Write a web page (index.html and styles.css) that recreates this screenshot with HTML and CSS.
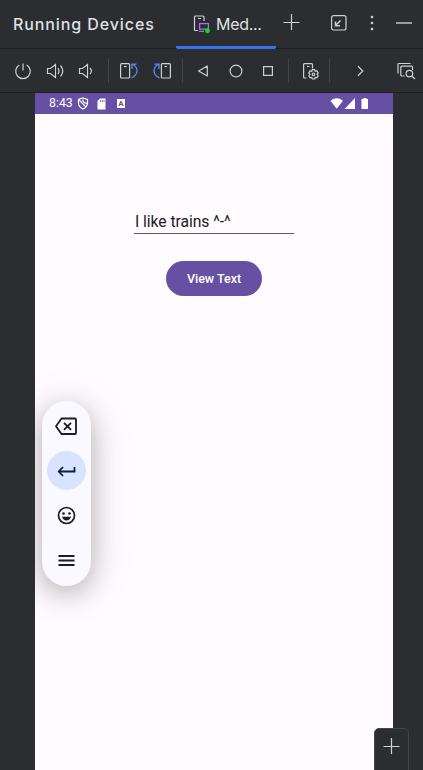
FILE: index.html
```html
<!DOCTYPE html>
<html lang="en">
<head>
<meta charset="utf-8">
<title>Running Devices</title>
<link rel="stylesheet" href="styles.css">
</head>
<body>
<div class="window">
  <header class="header">
    <h1 class="title">Running Devices</h1>
    <div class="tab">
      <svg class="tab-icon" width="18" height="20" viewBox="0 0 18 20" fill="none">
        <path d="M5 16.500H2.500Q1.500 16.500 1.500 15.500V3Q1.500 2 2.500 2H10Q11 2 11 3V7M5 4.500H8" stroke="#ced0d6" stroke-width="1.200"/>
        <path d="M6.600 9.600H15.400V15.200H6.600ZM6 17.400H11" stroke="#a571e6" stroke-width="1.300"/>
        <circle cx="14.500" cy="16.800" r="2.400" fill="#00f000"/>
      </svg>
      <span>Med...</span>
    </div>
    <svg class="add" width="18" height="18" viewBox="0 0 18 18"><path d="M9.500 1V17M1.500 9.500H17.500" stroke="#ced0d6" stroke-width="1.200"/></svg>
    <svg class="dock" width="18" height="18" viewBox="0 0 18 18" fill="none" stroke="#ced0d6" stroke-width="1.200"><rect x="1.600" y="1.600" width="14.400" height="14.400" rx="2"/><path d="M10.500 6.500L5.500 11.500M5.500 7.500V11.700H10" stroke-width="1.500"/></svg>
    <svg class="more" width="4" height="18" viewBox="0 0 4 18" fill="#ced0d6"><circle cx="2" cy="3" r="1.300"/><circle cx="2" cy="9" r="1.300"/><circle cx="2" cy="15" r="1.300"/></svg>
    <span class="minimize"></span>
  </header>

  <nav class="toolbar">
    <svg class="icon first" viewBox="0 0 20 20"><path d="M6.300 4A7.300 7.300 0 1 0 13.700 4M10 2.500V9.500"/></svg>
    <svg class="icon g12" viewBox="0 0 20 20"><path d="M2.500 7.500H5.500L10.500 3.500V16.500L5.500 12.500H2.500ZM13 7Q15 10 13 13M15.500 4.500Q20 10 15.500 15.500"/></svg>
    <svg class="icon g12" viewBox="0 0 20 20"><path d="M2.500 7.500H5.500L10.500 3.500V16.500L5.500 12.500H2.500ZM13 7Q15.800 10 13 13"/></svg>
    <i class="sep g11"></i>
    <svg class="icon g10" viewBox="0 0 20 20"><rect x="1.600" y="2.600" width="9" height="14.400" rx="1"/><path d="M5 5.500H7.500"/><path class="blue" d="M12.500 17C19.800 13.500 19.600 6.500 13.500 3.200M13 8V3.200H17.500"/></svg>
    <svg class="icon g13" viewBox="0 0 20 20"><rect x="9.400" y="2.600" width="9" height="14.400" rx="1"/><path d="M12.500 5.500H15"/><path class="blue" d="M7.500 17C.2 13.500 .4 6.500 6.500 3.200M7 8V3.200H2.500"/></svg>
    <i class="sep g10"></i>
    <svg class="icon g10" viewBox="0 0 20 20"><path d="M14.300 5V15L5.600 10Z" stroke-linejoin="round"/></svg>
    <svg class="icon g13" viewBox="0 0 20 20"><circle cx="10" cy="10" r="5.900"/></svg>
    <svg class="icon g12" viewBox="0 0 20 20"><rect x="5.600" y="5.600" width="8.800" height="8.800"/></svg>
    <i class="sep g10"></i>
    <svg class="icon gear" viewBox="0 0 20 20"><path d="M6.500 17H4.500Q3.600 17 3.600 16V3.500Q3.600 2.600 4.500 2.600H11.500Q12.500 2.600 12.500 3.600V7.500M7 5.500H9.500"/><path d="M12.300 8.700H14.700L15.200 10.200L17 9.900L18.200 12L17.100 13.300L18.200 14.700L17 16.700L15.200 16.400L14.700 18H12.300L11.800 16.400L10 16.700L8.800 14.700L9.900 13.300L8.800 12L10 9.900L11.800 10.200Z"/><circle cx="13.500" cy="13.300" r="1.300"/></svg>
    <i class="sep g9"></i>
    <svg class="icon g20" viewBox="0 0 20 20"><path d="M8 5.300L12.800 10L8 14.700"/></svg>
    <svg class="icon g26" viewBox="0 0 20 20"><path d="M2 12.500V3.500Q2 2.500 3 2.500H14.500M8.500 15H5.800Q4.800 15 4.800 14V6.200Q4.800 5.200 5.800 5.200H15.500Q16.500 5.200 16.500 6.200V9"/><circle cx="13.400" cy="12.600" r="3.300"/><path d="M15.800 15L19 18"/></svg>
  </nav>

  <main class="device">
    <div class="status">
      <span class="time">8:43</span>
      <svg class="shield" width="12" height="13" viewBox="0 0 12 13" fill="none" stroke="#fff" stroke-width="1.200"><path d="M6 1L10.500 2.500V6Q10.500 10 6 12Q1.500 10 1.500 6V2.500ZM2 2.800L9 10M6 2.500V4.500Q7.500 6.500 10 6"/></svg>
      <svg class="sd" width="9" height="12" viewBox="0 0 9 12"><path d="M3 .5H8.500V11.500H.5V3Z" fill="#fff"/><path d="M3.500 2V4M5.200 2V4M7 2V4" stroke="#6750a4" stroke-width=".8"/></svg>
      <span class="lang">A</span>
      <svg class="signals" width="40" height="13" viewBox="0 0 40 13" fill="#fff"><path d="M.5 3.700Q6.700-1.200 13 3.700L6.700 11.700Z"/><path d="M25 1V12H14.500Z"/><path d="M33.500 1H36.500V2H38V12H31.500V2H33.500Z"/></svg>
    </div>
    <div class="field">I like trains ^-^</div>
    <button class="view">View Text</button>
    <aside class="keys">
      <svg width="24" height="24" viewBox="0 0 24 24" fill="none" stroke="#1b1b21" stroke-width="1.800"><path d="M7.500 4.500H21Q22 4.500 22 5.500V19Q22 20 21 20H7.500L2 12.300Z" stroke-linejoin="round"/><path d="M10 8.800L17 15.800M17 8.800L10 15.800"/></svg>
      <span class="enter"><svg width="24" height="24" viewBox="0 0 24 24" fill="none" stroke="#0c1e42" stroke-width="1.800"><path d="M19.500 8V12.500H4.500M8 8L3.800 12.500L8 17"/></svg></span>
      <svg width="24" height="24" viewBox="0 0 24 24"><g transform="translate(.5 .5)"><circle cx="12" cy="12" r="8" fill="none" stroke="#1b1b21" stroke-width="1.700"/><circle cx="9" cy="10" r="1.300" fill="#1b1b21"/><circle cx="15" cy="10" r="1.300" fill="#1b1b21"/><path d="M7.500 13.300H16.500Q15.500 17 12 17T7.500 13.300Z" fill="#1b1b21"/></g></svg>
      <svg width="24" height="24" viewBox="0 0 24 24"><path d="M4.500 8H20.500M4.500 12.500H20.500M4.500 17H20.500" stroke="#1b1b21" stroke-width="1.800"/></svg>
    </aside>
  </main>
  <button class="zoom" aria-label="Zoom in"><svg width="18" height="18" viewBox="0 0 18 18"><path d="M9.500 1V17M1.500 9.500H17.500" stroke="#ced0d6" stroke-width="1.200"/></svg></button>
</div>
</body>
</html>
```
FILE: styles.css
```css
* { box-sizing: border-box; }
body { margin: 0; background: #2b2d30; font-family: Inter, sans-serif; }
svg { display: block; flex: none; }
.window { position: relative; width: 423px; height: 770px; overflow: hidden; background: #2b2d30; }
.header { display: flex; height: 49px; border-bottom: 1px solid #1e1f22; color: #dfe1e5; }
.title { width: 163px; margin: 13px 0 0 13px; font-size: 16px; line-height: 22px; font-weight: 550; letter-spacing: .9px; white-space: nowrap; }
.tab { display: flex; width: 100px; height: 49px; padding: 14px 0 0 17px; border-bottom: 3px solid #3574f0; border-radius: 0 0 2px 2px; font-size: 16px; line-height: 21px; letter-spacing: -.3px; }
.tab-icon { margin: 0 5px 0 0; }
.add { margin: 13px 0 0 6px; }
.dock { margin: 14px 0 0 30px; }
.more { margin: 14px 0 0 22px; }
.minimize { width: 16px; height: 2px; margin: 22px 0 0 22px; background: #9a9ca1; }
.toolbar { display: flex; align-items: center; height: 44px; border-bottom: 1px solid #1e1f22; }
.icon { width: 20px; height: 20px; fill: none; stroke: #ced0d6; stroke-width: 1.200; }
.blue { stroke: #548af7; stroke-width: 1.300; }
.sep { width: 1px; height: 24px; background: #43454a; flex: none; }
.first { margin-left: 13px; }
.g9 { margin-left: 9px; }
.g10 { margin-left: 10px; }
.g11 { margin-left: 11px; }
.g12 { margin-left: 12px; }
.g13 { margin-left: 13px; }
.g20 { margin-left: 20px; }
.g26 { margin-left: 26px; }
.gear { margin-left: 11px; }
.device { position: relative; width: 358px; height: 677px; margin-left: 35px; overflow: hidden; background: #fffbfe; font-family: Roboto, sans-serif; }
.status { display: flex; align-items: center; height: 21px; padding-left: 14px; background: #6750a4; color: #fff; }
.time { width: 28px; font-size: 12.300px; line-height: 21px; }
.shield { width: 12px; }
.sd { margin-left: 8px; }
.lang { width: 8px; height: 9px; margin-left: 11px; background: #fff; color: #6750a4; font-size: 8px; line-height: 9px; font-weight: 700; text-align: center; }
.signals { margin-left: 205px; }
.field { width: 160px; height: 29px; margin: 91px 0 0 99px; padding-left: 1px; border-bottom: 1px solid #5e5668; color: #1c1b1f; font-size: 15.700px; line-height: 33px; letter-spacing: -.05px; white-space: nowrap; }
.view { display: block; width: 96px; height: 35px; margin: 27px 0 0 131px; padding: 0; border: 0; border-radius: 18px; background: #6750a4; color: #fff; font: 500 12.500px/36px Roboto, sans-serif; }
.keys { display: flex; flex-direction: column; align-items: center; width: 49px; height: 185px; margin: 105px 0 0 7px; padding-top: 13px; border-radius: 25px; background: #faf9ff; box-shadow: 0 7px 28px rgba(0,0,0,.27), 0 4px 56px rgba(0,0,0,.08); }
.keys > svg { margin-left: -1px; }
.enter { display: flex; align-items: center; justify-content: center; width: 39px; height: 39px; margin: 13px 0; border-radius: 50%; background: #d9e2ff; }
.keys > svg:last-child { margin-top: 21px; }
.zoom { position: absolute; left: 374px; top: 728px; display: flex; align-items: flex-start; width: 35px; height: 48px; padding: 8px 0 0 7px; border: 1px solid #43454a; border-radius: 5px; background: #2b2d30; }
```
